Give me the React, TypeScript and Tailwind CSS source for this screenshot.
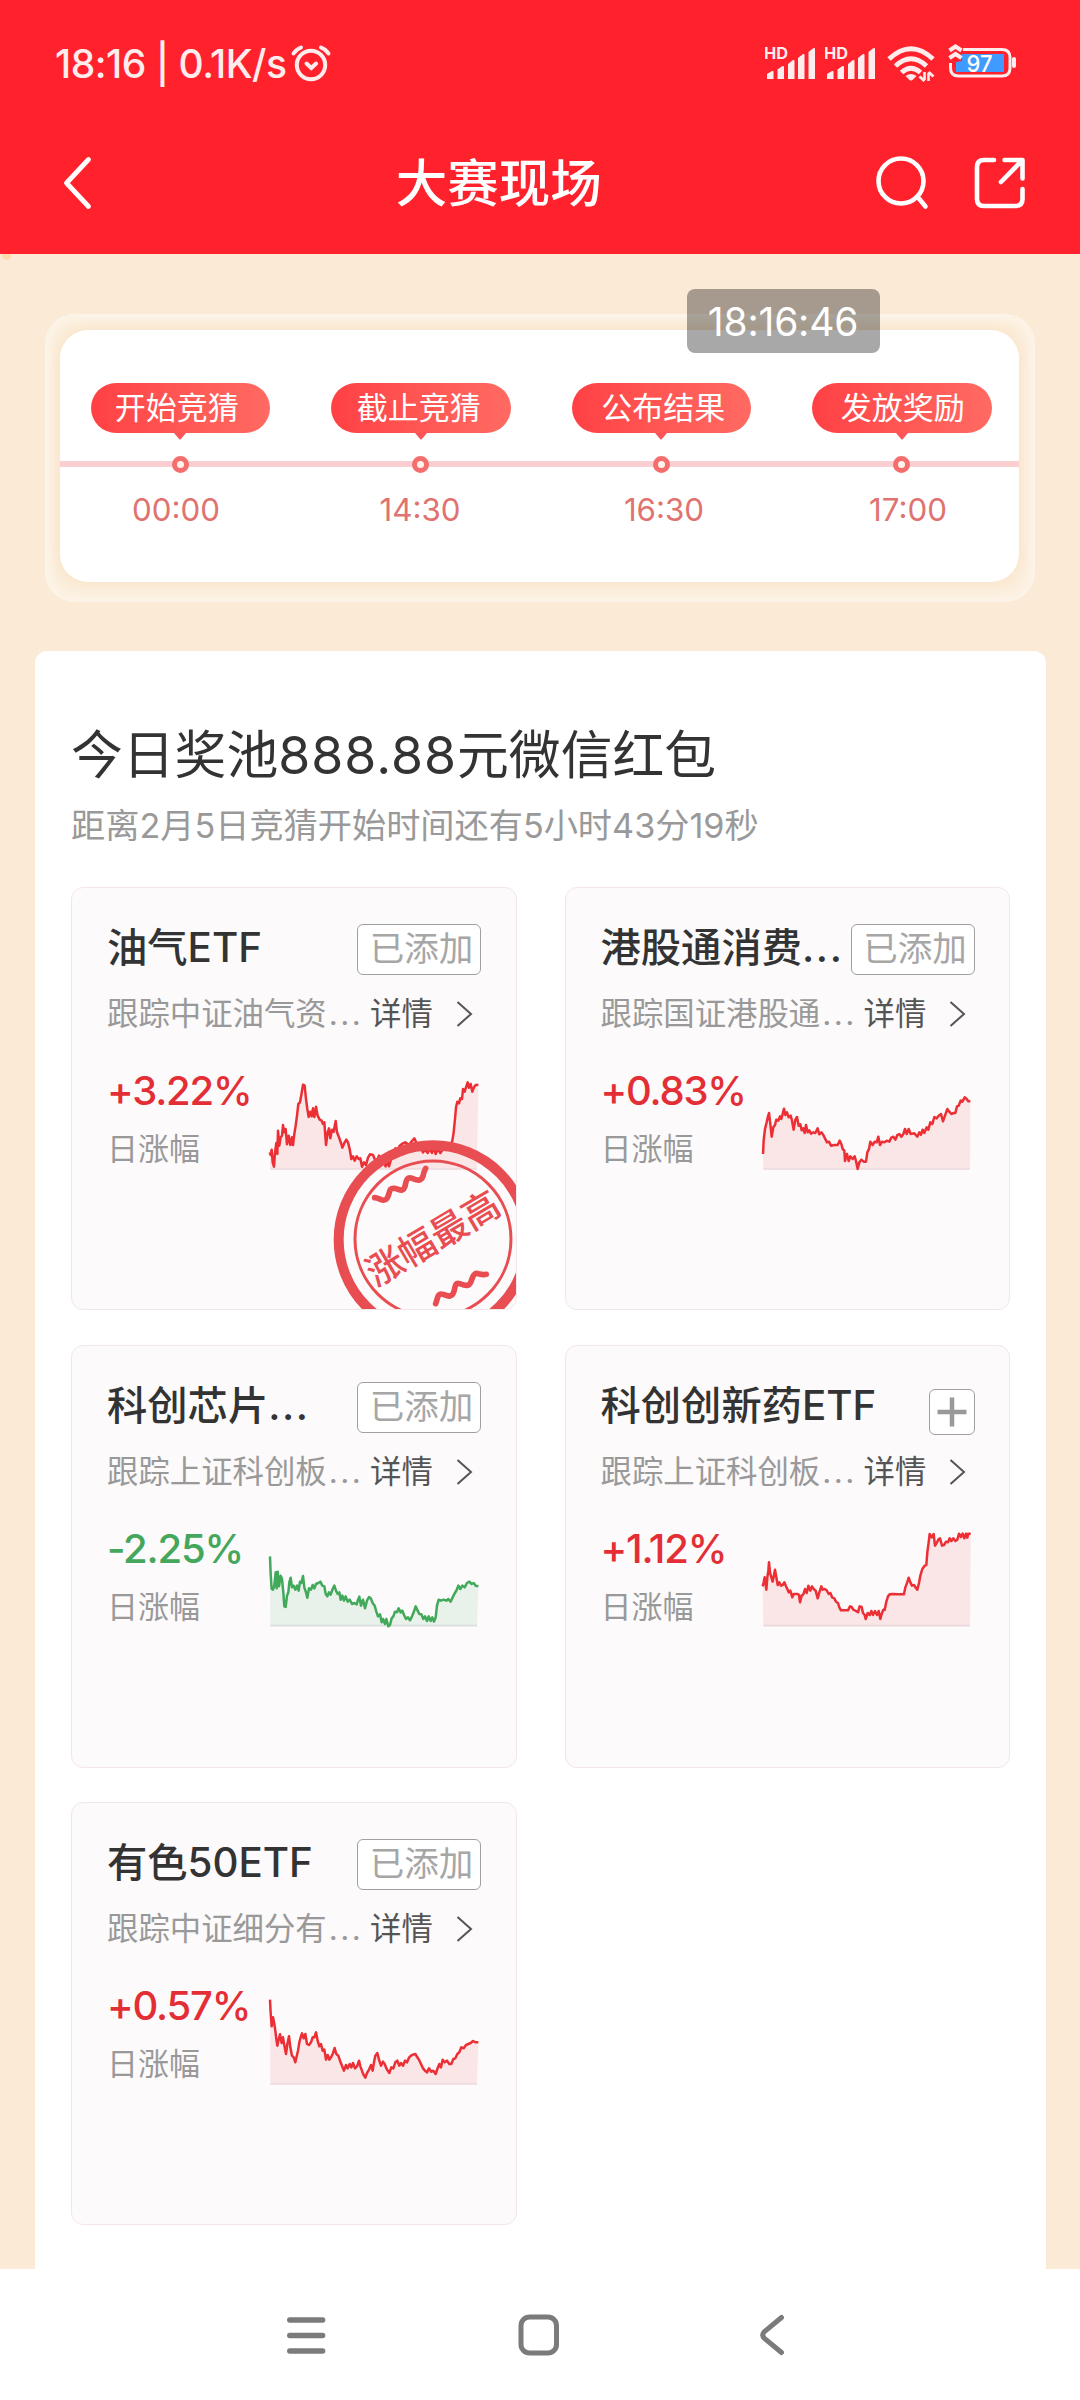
import { Fragment } from 'react';

const stages = [
  { label: '开始竞猜', time: '00:00', nudge: 'pr-[7px]' },
  { label: '截止竞猜', time: '14:30', nudge: 'pr-[4px]' },
  { label: '公布结果', time: '16:30', nudge: 'pl-[4px]' },
  { label: '发放奖励', time: '17:00', nudge: 'pl-[2px]' }
] as const;

interface Fund {
  name: string;
  // long names are cut off with dots
  cut?: boolean;
  desc: string;
  change: string;
  added: boolean;
  best?: boolean;
  // top left corner of the chart's own coordinate space
  origin: [number, number];
  base: number;
  points: string;
}

const funds: Fund[] = [
  {
    name: '油气ETF',
    desc: '跟踪中证油气资',
    change: '+3.22%',
    added: true,
    best: true,
    origin: [614, 600],
    base: 900,
    points:
      '628,850 631,858 634,842 637,880 641,893 644,850 648,822 651,855 653,785 657,830 661,805 665,800 668,768 672,790 676,780 680,826 685,800 690,828 695,805 698,828 702,795 706,770 710,740 714,705 719,700 724,672 728,647 733,650 737,690 741,720 745,744 750,728 754,742 758,718 762,744 767,713 772,740 778,752 784,755 788,765 792,760 797,828 802,790 806,778 810,808 815,782 820,788 826,756 830,790 836,805 842,822 846,836 852,822 858,812 863,820 868,840 873,870 878,862 883,875 889,862 895,870 900,868 905,893 911,880 917,888 923,866 929,856 938,858 943,870 949,878 956,860 963,870 970,880 976,892 981,876 986,892 992,872 998,860 1005,838 1012,845 1018,830 1026,824 1035,820 1046,828 1055,816 1062,808 1070,825 1075,840 1082,838 1088,850 1095,842 1102,852 1108,838 1115,852 1120,832 1126,855 1133,840 1140,852 1147,842 1154,838 1162,828 1170,830 1176,815 1180,790 1184,750 1187,715 1191,698 1196,703 1200,688 1205,690 1208,660 1213,668 1217,655 1222,640 1226,656 1231,645 1236,668 1241,655 1246,648 1254,647'
  },
  {
    name: '港股通消费',
    cut: true,
    desc: '跟踪国证港股通',
    change: '+0.83%',
    added: true,
    origin: [626, 600],
    base: 900,
    points:
      '641,855 643,815 647,780 652,760 656,742 659,732 663,765 667,803 672,775 677,768 681,752 687,755 692,742 696,750 700,735 704,719 708,738 713,730 718,745 724,740 728,755 733,782 738,752 743,744 748,770 753,766 757,784 762,778 766,792 770,768 775,790 780,784 785,794 792,790 798,792 805,778 810,796 816,790 822,798 827,808 833,820 839,818 845,830 855,828 865,828 871,815 876,825 880,840 885,845 887,876 893,855 898,876 903,862 910,870 916,862 920,876 925,900 930,880 936,872 943,878 950,878 954,850 959,840 963,818 970,828 976,818 982,820 987,803 992,828 998,818 1005,820 1012,815 1020,818 1026,806 1032,803 1038,812 1044,798 1050,795 1056,803 1062,795 1067,780 1072,795 1078,780 1084,795 1095,793 1104,803 1110,790 1115,797 1120,782 1125,792 1132,775 1137,782 1143,760 1149,765 1155,744 1162,748 1168,740 1175,735 1181,757 1187,740 1194,720 1200,728 1206,735 1213,732 1218,732 1223,712 1228,710 1234,695 1239,698 1246,685 1252,690 1257,697 1263,697'
  },
  {
    name: '科创芯片',
    cut: true,
    desc: '跟踪上证科创板',
    change: '-2.25%',
    added: true,
    origin: [614, 594],
    base: 890,
    points:
      '629,682 631,735 634,780 638,782 642,770 646,730 649,778 652,728 656,772 661,740 665,750 669,790 672,832 676,834 680,800 684,790 687,760 691,746 695,775 700,770 705,782 710,770 715,785 719,758 723,762 728,741 732,775 737,790 741,806 746,778 752,782 757,768 762,778 767,765 774,762 780,758 786,770 792,772 796,795 801,802 806,790 811,797 817,780 822,770 827,785 832,795 837,790 841,812 846,800 851,815 856,802 862,818 868,812 875,825 882,822 889,826 893,812 897,803 902,830 908,812 914,838 920,815 926,804 931,808 937,822 943,830 948,848 953,862 959,856 964,880 968,870 974,885 978,870 984,892 989,888 994,868 999,862 1004,848 1010,850 1015,838 1021,850 1026,845 1031,858 1037,870 1043,865 1049,874 1055,862 1060,850 1066,832 1072,845 1077,855 1083,856 1089,870 1094,862 1100,876 1105,862 1111,876 1116,865 1121,878 1126,865 1130,830 1135,812 1142,815 1150,812 1158,815 1164,810 1171,818 1177,805 1182,795 1188,785 1194,770 1200,780 1206,770 1213,775 1220,762 1227,758 1234,765 1240,762 1246,770 1254,772'
  },
  {
    name: '科创创新药ETF',
    desc: '跟踪上证科创板',
    change: '+1.12%',
    added: false,
    origin: [626, 594],
    base: 890,
    points:
      '640,772 643,760 646,745 649,765 651,782 654,745 657,725 659,700 662,730 666,745 670,758 674,738 677,722 681,745 685,768 690,760 695,770 700,768 705,760 710,772 714,780 718,790 723,785 729,805 733,795 740,795 745,795 749,798 752,820 757,800 762,796 767,780 772,792 777,770 783,785 788,772 793,780 799,785 805,808 810,790 816,772 820,782 826,780 832,784 838,795 843,792 849,806 855,808 860,818 866,822 870,835 875,844 885,844 896,844 902,832 907,834 912,842 920,846 926,850 931,832 937,834 941,852 946,858 949,870 955,852 961,858 966,846 971,858 977,846 983,858 988,846 993,870 997,855 1002,842 1006,843 1011,818 1016,802 1021,796 1030,795 1045,796 1064,796 1068,775 1073,762 1078,746 1083,760 1088,770 1094,768 1099,776 1104,782 1109,762 1113,740 1119,720 1126,710 1131,708 1134,670 1138,640 1141,615 1147,625 1153,615 1157,650 1163,640 1168,630 1172,628 1178,650 1184,648 1190,638 1196,640 1201,628 1206,636 1212,628 1218,636 1224,632 1229,614 1235,624 1240,614 1245,628 1250,614 1254,626 1257,614 1264,614'
  },
  {
    name: '有色50ETF',
    desc: '跟踪中证细分有',
    change: '+0.57%',
    added: true,
    origin: [614, 585],
    base: 885,
    points:
      '629,632 631,672 634,712 638,685 642,705 645,725 648,750 651,770 655,752 659,736 664,762 668,745 673,775 677,795 681,765 686,742 690,775 695,800 700,805 705,820 709,802 713,785 717,760 721,745 725,733 730,748 735,735 740,765 746,768 752,760 757,745 762,745 767,730 772,755 777,772 782,765 787,785 792,782 797,812 802,798 807,812 812,805 817,795 823,777 828,795 834,800 839,815 845,830 851,845 857,828 862,838 868,825 873,835 878,822 884,838 890,832 896,815 900,832 906,848 911,860 915,866 920,852 926,842 932,828 937,845 941,820 945,800 951,792 956,812 962,830 968,818 973,825 979,840 987,852 993,835 999,838 1005,820 1011,815 1017,830 1022,822 1028,830 1034,815 1040,820 1046,806 1052,800 1058,797 1065,795 1071,805 1076,812 1082,825 1088,838 1094,845 1100,850 1106,838 1113,848 1119,845 1126,855 1131,840 1137,825 1142,835 1147,812 1153,820 1160,815 1167,825 1173,825 1179,810 1185,808 1191,795 1197,790 1203,775 1210,778 1217,768 1224,765 1231,762 1238,756 1246,760 1254,760'
  }
];

const Signal = () => (
  <svg className="h-[36px] w-[50px]" viewBox="0 0 50 36" fill="#FFEDEE">
    <text x="-1" y="15" fontSize="15.5" fontWeight="700" textLength="24" lengthAdjust="spacingAndGlyphs">HD</text>
    <path d="M2 30l5-3q1.500-.5 1.500 1v7h-6.500z M12.500 25.500l5-3.500q1.500-.5 1.500 1v12h-6.500z M23 20l5-4q1.500-.5 1.500 1v18h-6.500z M33 14l5-4q1.500-.5 1.500 1v24h-6.500z M43.500 8l5-4q1.500-.5 1.500 1v30h-6.500z" />
  </svg>
);

const StatusBar = () => (
  <div className="flex h-[124px] items-start justify-between pt-[42px] pr-[62px] pl-[55px] text-[#FFEDEE]">
    <div className="flex h-[44px] items-center">
      <span className="w-[235px] text-[39px] leading-[44px] font-medium tracking-[-0.5px] whitespace-nowrap">18:16 | 0.1K/s</span>
      <svg className="h-[42px] w-[42px]" viewBox="0 0 42 42" fill="none" stroke="currentColor" strokeWidth="4" strokeLinecap="round">
        <circle cx="21" cy="22" r="14.200" />
        <path d="M3.500 10.500Q6 6.500 11 4.500M38.500 10.500Q36 6.500 31 4.500M16.500 20.500l4.800 4.500 4.800-4.500" />
      </svg>
    </div>
    <div className="flex items-start pt-[2px]">
      <Signal />
      <div className="ml-[10px]">
        <Signal />
      </div>
      <svg className="ml-[12px] h-[40px] w-[48px]" viewBox="0 0 48 40" fill="none" stroke="currentColor" strokeWidth="5">
        <path d="M2 15Q24 -5.500 46 15M8.500 22Q24 7.500 39.500 22M14.500 28.500Q24 20 33.500 28.500" />
        <path d="M18.500 32q5.500-4 11 0l-4 4q-1.500 1-3 0z" fill="currentColor" stroke="none" />
        <path d="M37.500 28v8M41.500 37v-8" strokeWidth="2.600" />
        <path d="M32.500 32.500l5 4.500M46.500 32.500l-5-4.500" strokeWidth="3" />
      </svg>
      <svg className="ml-[13px] h-[36px] w-[70px]" viewBox="0 0 70 36" fill="none">
        <path d="M15 5.500H54q8 0 8 8V24q0 8-8 8H10.500q-8 0-8-8v-5" stroke="currentColor" strokeWidth="3" />
        <path d="M66 15v7" stroke="currentColor" strokeWidth="4" strokeLinecap="round" />
        <path d="M8 18l6-1V10h42v18H8z" fill="#3F9BFF" />
        <path d="M1.500 6.500L7.500 2.500l6 4M1.500 14L7.500 10l6 4" stroke="currentColor" strokeWidth="4" />
        <text x="31.500" y="27.500" textAnchor="middle" fontSize="23" fontWeight="500" fill="#fff" textLength="26" lengthAdjust="spacingAndGlyphs">97</text>
      </svg>
    </div>
  </div>
);

const TitleBar = () => (
  <div className="flex h-[118px] items-center justify-between pr-[50.5px] pl-[60px] text-white">
    <svg className="h-[56px] w-[36px]" viewBox="0 0 36 56" fill="none" stroke="currentColor" strokeWidth="4.800" strokeLinecap="round" strokeLinejoin="round">
      <path d="M28.500 4.500L6.500 28l22 23.500" />
    </svg>
    <h1 className="ml-[27px] text-[51.5px] leading-[60px] font-medium">大赛现场</h1>
    <div className="flex gap-[43px]">
      <svg className="h-[56px] w-[56px]" viewBox="0 0 56 56" fill="none" stroke="currentColor" strokeWidth="4.600" strokeLinecap="round">
        <circle cx="27" cy="26" r="22.500" />
        <path d="M44.500 43l7 8.500" />
      </svg>
      <svg className="h-[56px] w-[56px]" viewBox="0 0 56 56" fill="none" stroke="currentColor" strokeWidth="4.600" strokeLinecap="round" strokeLinejoin="round">
        <path d="M21 5H11Q4 5 4 12V44Q4 51 11 51H42Q49.500 51 49.500 44V34M31.500 5H49.500V23.500M49 5.500L28 27" />
      </svg>
    </div>
  </div>
);

const Timeline = () => (
  <section className="relative mx-[45px] mt-[60px] h-[288px] rounded-[30px] border-2 border-[#FCF4E8] bg-[#FBEEDC] pt-[14px] pl-[13px] shadow-[inset_0_0_10px_3px_#FDF5EA]">
    <div className="h-[252px] w-[959px] rounded-[28px] bg-white pt-[53px] shadow-[0_0_10px_4px_#FAE6CD]">
      <div className="flex gap-[61px] pl-[30.5px]">
        {stages.map((stage) => (
          <div className="flex w-[179.5px] flex-col items-center" key={stage.label}>
            <div className={`flex h-[50px] w-full items-center justify-center rounded-full bg-linear-to-r from-[#FF4044] to-[#FF6A62] text-[31px] text-white ${stage.nudge}`}>
              {stage.label}
            </div>
            <svg className="h-[7px] w-[12px]" viewBox="0 0 12 7" fill="#FB5558">
              <path d="M0 0H12L6.500 6.500h-1z" />
            </svg>
          </div>
        ))}
      </div>
      <div className="mt-[15px] flex h-[18px] items-center bg-[linear-gradient(#FBCED1,#FBCED1)] bg-[length:100%_6px] bg-center bg-no-repeat pl-[111.5px]">
        {stages.map((stage, i) => (
          <Fragment key={stage.time}>
            {i > 0 && <span className="w-[223.5px]" />}
            <span className="h-[17px] w-[17px] rounded-full border-[5px] border-[#F46E6D] bg-[#FFF3EC]" />
          </Fragment>
        ))}
      </div>
      <div className="mt-[17px] ml-[-6px] grid w-[976px] grid-cols-4 text-center text-[31.3px] leading-[40px] text-[#E07370]">
        {stages.map((stage) => (
          <span key={stage.time}>{stage.time}</span>
        ))}
      </div>
    </div>
    <div className="absolute top-[-27px] left-[640px] flex h-[64px] w-[193px] items-center justify-center rounded-lg bg-black/34 pt-[2px] pr-[1px] text-[39px] tracking-[-0.2px] text-white">18:16:46</div>
  </section>
);

const Trend = ({ fund }: { fund: Fund }) => {
  const up = fund.change.startsWith('+');
  const [x, y] = fund.origin;
  const left = x + 16;
  const right = x + 636;
  return (
    <svg className="mt-px h-[104px] w-[220px] shrink-0" viewBox={`${x} ${y} 660 312`} fill="none">
      <polygon points={`${left},${fund.base} ${fund.points} ${right},${fund.base}`} fill={up ? '#FAE5E7' : '#E9F1EB'} />
      <path d={`M${left} ${fund.base}H${right}`} stroke={up ? '#EBD9DC' : '#DCE0DD'} strokeWidth="5" />
      <polyline points={fund.points} stroke={up ? '#EC2F35' : '#41A95A'} strokeWidth="7.500" strokeLinejoin="round" />
    </svg>
  );
};

const Stamp = () => (
  <svg className="absolute right-0 bottom-0 h-[172.7px] w-[183.3px]" viewBox="817 797 550 518" fill="none" stroke="#E84D52">
    <circle cx="1120" cy="1108" r="283" strokeWidth="30" />
    <circle cx="1120" cy="1106" r="234" strokeWidth="9" />
    <path d="M945 982C960 982 972 998 982 984C992 968 986 952 1004 954C1022 958 1030 966 1036 948C1040 932 1040 918 1058 924C1072 930 1084 934 1090 918Q1092 904 1098 894" strokeWidth="17" strokeLinecap="round" />
    <path d="M1128 1300C1134 1288 1132 1266 1150 1272C1166 1278 1176 1282 1182 1266C1188 1250 1184 1236 1200 1240C1216 1246 1228 1250 1234 1234C1240 1216 1244 1206 1256 1210Q1270 1214 1280 1212" strokeWidth="17" strokeLinecap="round" />
    <text x="1120" y="1144" transform="rotate(-30.500 1120 1104)" textAnchor="middle" fontSize="111" fontWeight="500" fill="#E84D52" stroke="none">涨幅最高</text>
  </svg>
);

const FundCard = ({ fund }: { fund: Fund }) => (
  <article className="relative h-[423px] overflow-hidden rounded-xl border border-[#F2E6E9] bg-[#FCFAFB] pt-[36px] pl-[35px]">
    <div className="flex h-[51px] w-[374px] items-center justify-between">
      <h3 className="mt-[-3px] text-[40.3px] leading-[50px] font-medium whitespace-nowrap text-[#333]">
        {fund.name}
        {fund.cut && <span className="tracking-[0.04em]">...</span>}
      </h3>
      {fund.added ? (
        <button className="flex h-[51px] w-[124px] shrink-0 items-center justify-center rounded-md border-[1.5px] border-[#A0A0A0] bg-white pl-[5px] text-[34.5px] leading-none whitespace-nowrap text-[#A6A6A6]">已添加</button>
      ) : (
        <button className="mt-[9px] flex h-[46px] w-[46px] shrink-0 items-center justify-center rounded-md border-[1.5px] border-[#A0A0A0] bg-white">
          <svg className="h-[30px] w-[30px]" viewBox="0 0 30 30" stroke="#999" strokeWidth="4.500">
            <path d="M15 .5v29M.5 15h29" />
          </svg>
        </button>
      )}
    </div>
    <div className="mt-[19px] flex h-[40px] items-center text-[31.4px] leading-[40px] whitespace-nowrap">
      <span className="w-[263px] text-[#999]">
        {fund.desc}
        <span className="ml-[2px] tracking-[0.08em]">...</span>
      </span>
      <span className="text-[#555]">详情</span>
      <svg className="ml-[23px] h-[26px] w-[17px]" viewBox="0 0 17 26" fill="none" stroke="#555" strokeWidth="2">
        <path d="M1.500 1L15 13 1.500 25" />
      </svg>
    </div>
    <div className="mt-[34px] flex">
      <div className="w-[157.5px] shrink-0 whitespace-nowrap">
        <div className={`text-[40px] leading-[46px] font-medium tracking-[-1.2px] ${fund.change.startsWith('+') ? 'text-[#E42E35]' : 'text-[#44A75B]'}`}>{fund.change}</div>
        <div className="mt-[15px] text-[31px] leading-[40px] text-[#999]">日涨幅</div>
      </div>
      <Trend fund={fund} />
    </div>
    {fund.best && <Stamp />}
  </article>
);

const NavBar = () => (
  <nav className="flex h-[131px] items-center bg-white pl-[284px] text-[#7B7B7B]">
    <svg className="h-[46px] w-[44px]" viewBox="0 0 44 46" stroke="currentColor" strokeWidth="5.300" strokeLinecap="round">
      <path d="M5.700 8h33M5.700 23.500h33M5.700 39h33" />
    </svg>
    <svg className="ml-[188px] h-[46px] w-[46px]" viewBox="0 0 46 46" fill="none" stroke="currentColor" strokeWidth="5">
      <rect x="5" y="5" width="35.500" height="36" rx="8.500" />
    </svg>
    <svg className="ml-[193px] h-[46px] w-[36px]" viewBox="0 0 36 46" fill="none" stroke="currentColor" strokeWidth="5" strokeLinecap="round">
      <path d="M26.500 5.500L9.500 19.500Q6 23 9.500 26.500L26.500 40.500" />
    </svg>
  </nav>
);

export default function App() {
  return (
    <div className="flex h-[2400px] w-[1080px] flex-col overflow-hidden bg-[#FAEAD6] font-[family-name:Inter,'Noto_Sans_CJK_SC',sans-serif]">
      <header className="h-[254px] shrink-0 bg-[#FF222D]">
        <StatusBar />
        <TitleBar />
      </header>
      <div className="relative h-[2015px] overflow-hidden">
        <span className="absolute top-0 left-[2px] h-[6px] w-[9px] rounded-b-full bg-[#FBDCAE]" />
        <Timeline />
        <main className="mx-[35px] mt-[49px] h-[1640px] w-[1011px] rounded-t-xl bg-white px-[36px] pt-[73px]">
          <h2 className="text-[51.8px] leading-[62px] whitespace-nowrap text-[#333]">
            今日奖池<span className="tracking-[1px]">888.88</span>元微信红包
          </h2>
          <p className="mt-[18px] text-[34.2px] leading-[44px] whitespace-nowrap text-[#999]">距离2月5日竞猜开始时间还有5小时43分19秒</p>
          <div className="mt-[39px] grid grid-cols-2 gap-x-[48px] gap-y-[34.5px]">
            {funds.map((fund) => (
              <FundCard fund={fund} key={fund.name} />
            ))}
          </div>
        </main>
      </div>
      <NavBar />
    </div>
  );
}
